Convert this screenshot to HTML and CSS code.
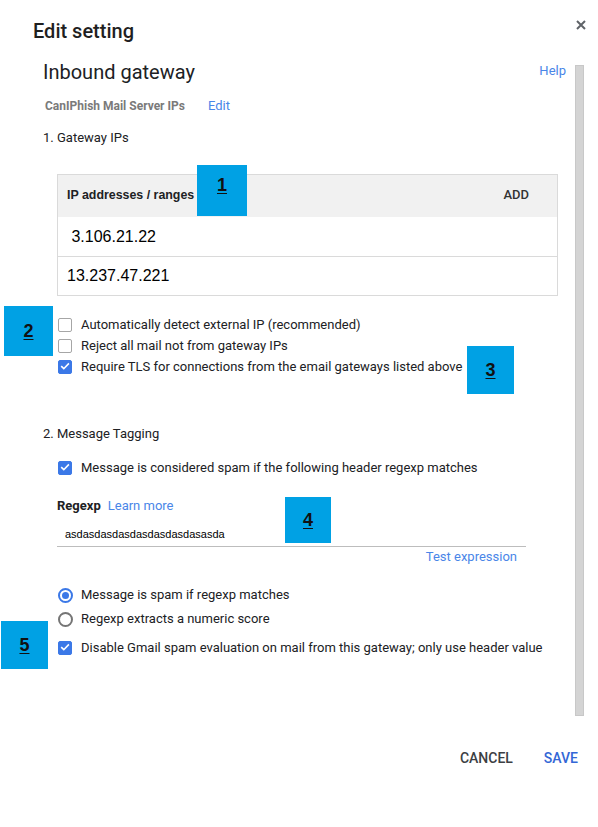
FILE: index.html
```html
<!DOCTYPE html>
<html>
<head>
<meta charset="utf-8">
<link rel="stylesheet" href="styles.css">
</head>
<body>
<div class="dialog">
  <div class="header">
    <div class="title">Edit setting</div>
    <svg class="close" width="10" height="10" viewBox="0 0 10 10"><path d="M1 1L9 9M9 1L1 9" stroke="#5f6368" stroke-width="2" fill="none"/></svg>
  </div>
  <div class="body">
    <div class="main">
      <div class="head-row">
        <div class="heading">Inbound gateway</div>
        <a class="link help">Help</a>
      </div>
      <div class="sub-row">
        <span class="sub-label">CanIPhish Mail Server IPs</span>
        <a class="link">Edit</a>
      </div>
      <div class="section first">1. Gateway IPs</div>
      <div class="table">
        <div class="thead"><span class="th">IP addresses / ranges</span><span class="add">ADD</span></div>
        <div class="tr first-row"><span class="td"> 3.106.21.22</span></div>
        <div class="tr"><span class="td">13.237.47.221</span></div>
      </div>
      <div class="opts first-opts">
        <div class="opt"><span class="cb"></span><span class="lbl">Automatically detect external IP (recommended)</span></div>
        <div class="opt"><span class="cb"></span><span class="lbl">Reject all mail not from gateway IPs</span></div>
        <div class="opt"><span class="cb on"><svg width="14" height="14" viewBox="0 0 14 14"><path d="M3.2 7.2L5.8 9.7L10.9 4.4" stroke="#fff" stroke-width="1.6" fill="none"/></svg></span><span class="lbl">Require TLS for connections from the email gateways listed above</span></div>
      </div>
      <div class="section second">2. Message Tagging</div>
      <div class="opt spam-opt"><span class="cb on"><svg width="14" height="14" viewBox="0 0 14 14"><path d="M3.2 7.2L5.8 9.7L10.9 4.4" stroke="#fff" stroke-width="1.6" fill="none"/></svg></span><span class="lbl">Message is considered spam if the following header regexp matches</span></div>
      <div class="regexp">
        <div class="regexp-head"><span class="regexp-label">Regexp</span><a class="link">Learn more</a></div>
        <div class="input">asdasdasdasdasdasdasdasasda</div>
        <div class="test-row"><a class="link">Test expression</a></div>
      </div>
      <div class="radios">
        <div class="opt radio-opt"><span class="radio on"></span><span class="lbl">Message is spam if regexp matches</span></div>
        <div class="opt radio-opt"><span class="radio"></span><span class="lbl">Regexp extracts a numeric score</span></div>
      </div>
      <div class="opt disable-opt"><span class="cb on"><svg width="14" height="14" viewBox="0 0 14 14"><path d="M3.2 7.2L5.8 9.7L10.9 4.4" stroke="#fff" stroke-width="1.6" fill="none"/></svg></span><span class="lbl">Disable Gmail spam evaluation on mail from this gateway; only use header value</span></div>
    </div>
    <div class="scrollbar"></div>
  </div>
  <div class="footer">
    <span class="btn cancel">CANCEL</span>
    <span class="btn save">SAVE</span>
  </div>

  <div class="marker m1 top"><span>1</span></div>
  <div class="marker m2"><span>2</span></div>
  <div class="marker m3"><span>3</span></div>
  <div class="marker m4"><span>4</span></div>
  <div class="marker m5"><span>5</span></div>
</div>
</body>
</html>
```

FILE: styles.css
```css
* { box-sizing: border-box; }
html, body { margin: 0; padding: 0; background: #fff; }
body { font-family: Roboto, "Noto Sans", sans-serif; color: #202124; }

.dialog { position: relative; width: 598px; height: 827px; overflow: hidden; }

.header {
  display: flex;
  justify-content: space-between;
  align-items: flex-start;
  padding: 19px 12px 0 33px;
  height: 43px;
}
.title { font-size: 20px; line-height: 24px; font-weight: 500; color: #1f1f1f; }
.close { margin-top: 1px; display: block; }

.body { display: flex; height: 656px; margin-top: 17px; }
.main { flex: 1; padding: 0 9px 0 43px; }
.scrollbar {
  width: 9px;
  margin: 5px 14px 0 0;
  height: 651px;
  background: #d4d4d4;
  border: 1px solid #c8c8c8;
}

.link { color: #4a86e8; font-size: 13px; line-height: 16px; text-decoration: none; cursor: pointer; }

.head-row { display: flex; justify-content: space-between; align-items: flex-start; height: 24px; }
.heading { font-size: 20px; line-height: 24px; color: #202124; }
.help { margin-top: 3px; }

.sub-row { display: flex; align-items: baseline; gap: 23px; margin-top: 14px; padding-left: 2px; height: 16px; }
.sub-label { font-size: 12px; line-height: 16px; font-weight: 700; color: #7a7a7a; }

.section { font-size: 13px; line-height: 16px; color: #202124; }
.section.first { margin-top: 16px; }
.section.second { margin-top: 49px; }

.table { margin: 28px 8px 0 14px; border: 1px solid #dadada; font-family: "Liberation Sans", Arial, sans-serif; }
.thead {
  display: flex;
  justify-content: space-between;
  align-items: center;
  height: 42px;
  padding: 0 28px 3px 9px;
  background: #f1f1f1;
}
.th { font-size: 12.4px; font-weight: 700; color: #202124; }
.add { font-family: Roboto, sans-serif; font-size: 13px; font-weight: 500; color: #333; }
.tr { display: flex; align-items: center; height: 39px; padding-left: 9px; border-top: 1px solid #dadada; }
.tr.first-row { border-top: none; }
.td { font-size: 16px; color: #000; white-space: pre; }

.opts { margin-top: 18px; }
.opt { display: flex; align-items: center; height: 21px; padding-left: 15px; }
.lbl { font-size: 13px; line-height: 16px; color: #202124; margin-left: 9px; white-space: nowrap; }

.cb {
  width: 14px; height: 14px;
  border: 1.5px solid #a6a6a6;
  border-radius: 2px;
  flex: none;
  display: flex;
}
.cb.on { background: #3b78e7; border-color: #3b78e7; }
.cb svg { margin: -1.5px; }

.spam-opt { margin-top: 15px; }

.regexp { padding-left: 14px; margin-top: 20px; }
.regexp-head { display: flex; align-items: baseline; gap: 7px; height: 16px; }
.regexp-label { font-size: 13px; line-height: 16px; font-weight: 700; color: #202124; }
.input {
  margin-top: 12px;
  width: 469px;
  padding: 0 0 4px 8px;
  font-family: "Liberation Sans", Arial, sans-serif;
  font-size: 11px;
  line-height: 16px;
  color: #000;
  border-bottom: 1px solid #bdbdbd;
}
.test-row { width: 469px; display: flex; justify-content: flex-end; padding-right: 9px; margin-top: 2px; }

.radios { margin-top: 18px; }
.radio-opt { height: 24px; }
.radio {
  width: 15px; height: 15px;
  border: 2px solid #757575;
  border-radius: 50%;
  flex: none;
  margin-left: -0.5px;
  display: flex; align-items: center; justify-content: center;
}
.radio.on { border-color: #3b78e7; }
.radio.on::after { content: ""; width: 7px; height: 7px; border-radius: 50%; background: #3b78e7; }
.radio-opt .lbl { margin-left: 8.5px; }

.disable-opt { margin-top: 6px; }

.footer { display: flex; justify-content: flex-end; gap: 31px; padding: 34px 20px 0 0; }
.btn { font-size: 14px; line-height: 16px; font-weight: 500; }
.cancel { color: #3c4043; }
.save { color: #3367d6; }

.marker {
  position: absolute;
  background: #00a1e4;
  display: flex;
  align-items: center;
  justify-content: center;
  font-family: "Liberation Sans", Arial, sans-serif;
  font-weight: 700;
  font-size: 18px;
  color: #111;
}
.marker span { text-decoration: underline; text-underline-offset: 2px; }
.marker.top { align-items: flex-start; padding-top: 10px; }
.m1 { left: 197px; top: 165px; width: 50px; height: 51px; }
.m2 { left: 4px; top: 306px; width: 49px; height: 50px; }
.m3 { left: 467px; top: 346px; width: 47px; height: 48px; }
.m4 { left: 285px; top: 497px; width: 46px; height: 46px; }
.m5 { left: 1px; top: 621px; width: 47px; height: 48px; }
```
